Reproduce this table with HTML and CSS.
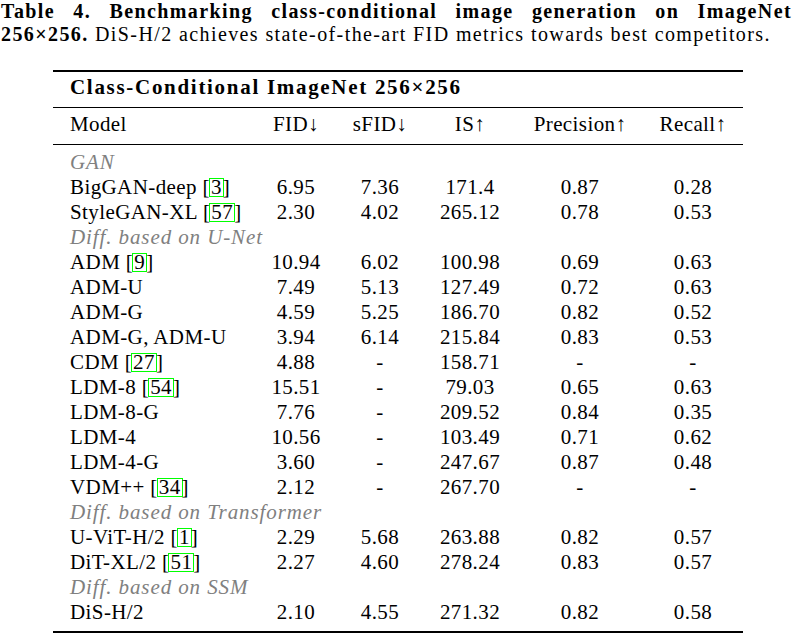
FILE: index.html
```html
<!DOCTYPE html>
<html>
<head>
<meta charset="utf-8">
<link rel="stylesheet" href="styles.css">
</head>
<body>
<div class="caption">
  <div class="cap-line1"><b>Table 4. Benchmarking class-conditional image generation on ImageNet</b></div>
  <div class="cap-line2"><b>256×256.</b> DiS-H/2 achieves state-of-the-art FID metrics towards best competitors.</div>
</div>
<table class="bench">
  <colgroup>
    <col class="c-model"><col class="c-fid"><col class="c-sfid"><col class="c-is"><col class="c-prec"><col class="c-rec">
  </colgroup>
  <thead>
    <tr class="title-row"><th colspan="6" class="title">Class-Conditional ImageNet 256×256</th></tr>
    <tr class="head-row">
      <th class="model">Model</th><th>FID↓</th><th>sFID↓</th><th>IS↑</th><th>Precision↑</th><th>Recall↑</th>
    </tr>
  </thead>
  <tbody>
    <tr class="first"><td class="model cat" colspan="6">GAN</td></tr>
    <tr><td class="model">BigGAN-deep <span class="cite">[<span class="ref">3</span>]</span></td><td>6.95</td><td>7.36</td><td>171.4</td><td>0.87</td><td>0.28</td></tr>
    <tr><td class="model">StyleGAN-XL <span class="cite">[<span class="ref">57</span>]</span></td><td>2.30</td><td>4.02</td><td>265.12</td><td>0.78</td><td>0.53</td></tr>
    <tr><td class="model cat" colspan="6">Diff. based on U-Net</td></tr>
    <tr><td class="model">ADM <span class="cite">[<span class="ref">9</span>]</span></td><td>10.94</td><td>6.02</td><td>100.98</td><td>0.69</td><td>0.63</td></tr>
    <tr><td class="model">ADM-U</td><td>7.49</td><td>5.13</td><td>127.49</td><td>0.72</td><td>0.63</td></tr>
    <tr><td class="model">ADM-G</td><td>4.59</td><td>5.25</td><td>186.70</td><td>0.82</td><td>0.52</td></tr>
    <tr><td class="model">ADM-G, ADM-U</td><td>3.94</td><td>6.14</td><td>215.84</td><td>0.83</td><td>0.53</td></tr>
    <tr><td class="model">CDM <span class="cite">[<span class="ref">27</span>]</span></td><td>4.88</td><td>-</td><td>158.71</td><td>-</td><td>-</td></tr>
    <tr><td class="model">LDM-8 <span class="cite">[<span class="ref">54</span>]</span></td><td>15.51</td><td>-</td><td>79.03</td><td>0.65</td><td>0.63</td></tr>
    <tr><td class="model">LDM-8-G</td><td>7.76</td><td>-</td><td>209.52</td><td>0.84</td><td>0.35</td></tr>
    <tr><td class="model">LDM-4</td><td>10.56</td><td>-</td><td>103.49</td><td>0.71</td><td>0.62</td></tr>
    <tr><td class="model">LDM-4-G</td><td>3.60</td><td>-</td><td>247.67</td><td>0.87</td><td>0.48</td></tr>
    <tr><td class="model">VDM++ <span class="cite">[<span class="ref">34</span>]</span></td><td>2.12</td><td>-</td><td>267.70</td><td>-</td><td>-</td></tr>
    <tr><td class="model cat" colspan="6">Diff. based on Transformer</td></tr>
    <tr><td class="model">U-ViT-H/2 <span class="cite">[<span class="ref">1</span>]</span></td><td>2.29</td><td>5.68</td><td>263.88</td><td>0.82</td><td>0.57</td></tr>
    <tr><td class="model">DiT-XL/2 <span class="cite">[<span class="ref">51</span>]</span></td><td>2.27</td><td>4.60</td><td>278.24</td><td>0.83</td><td>0.57</td></tr>
    <tr><td class="model cat" colspan="6">Diff. based on SSM</td></tr>
    <tr class="last"><td class="model">DiS-H/2</td><td>2.10</td><td>4.55</td><td>271.32</td><td>0.82</td><td>0.58</td></tr>
  </tbody>
</table>
</body>
</html>
```

FILE: styles.css
```css
html, body {
  margin: 0;
  padding: 0;
  background: #ffffff;
}
body {
  font-family: "Liberation Serif", "Times New Roman", serif;
  color: #000000;
  width: 795px;
}
.caption {
  padding-left: 1px;
  width: 791px;
  font-size: 20px;
  line-height: 23px;
}
.cap-line1 {
  letter-spacing: 1.4px;
  text-align: justify;
  text-align-last: justify;
}
.cap-line2 {
  letter-spacing: 1.4px;
}
.bench {
  margin-top: 24px;
  margin-left: 53px;
  width: 690px;
  border-collapse: collapse;
  table-layout: fixed;
  font-size: 21px;
  line-height: 25px;
  letter-spacing: 0.4px;
}
.c-model { width: 202px; }
.c-fid { width: 82px; }
.c-sfid { width: 86px; }
.c-is { width: 94px; }
.c-prec { width: 126px; }
.c-rec { width: 100px; }
.bench th, .bench td {
  padding: 0;
  text-align: center;
  font-weight: normal;
  white-space: nowrap;
}
.bench .model {
  text-align: left;
  padding-left: 17px;
}
.title-row th {
  border-top: 2px solid #000;
  padding-top: 3px;
  padding-bottom: 7px;
}
.bench th.title {
  font-weight: bold;
  text-align: left;
  padding-left: 17px;
  letter-spacing: 1.7px;
}
.head-row th {
  border-top: 1px solid #000;
  border-bottom: 1px solid #000;
  padding-top: 4px;
  padding-bottom: 7px;
}
.first td { padding-top: 5px; }
.last td {
  padding-bottom: 6px;
  border-bottom: 2px solid #000;
}
.cat {
  font-style: italic;
  color: #808080;
  letter-spacing: 0.9px;
}
.ref {
  display: inline-block;
  line-height: 17px;
  padding: 0 1px;
  outline: 1px solid #00ff00;
  outline-offset: 0;
}
```
